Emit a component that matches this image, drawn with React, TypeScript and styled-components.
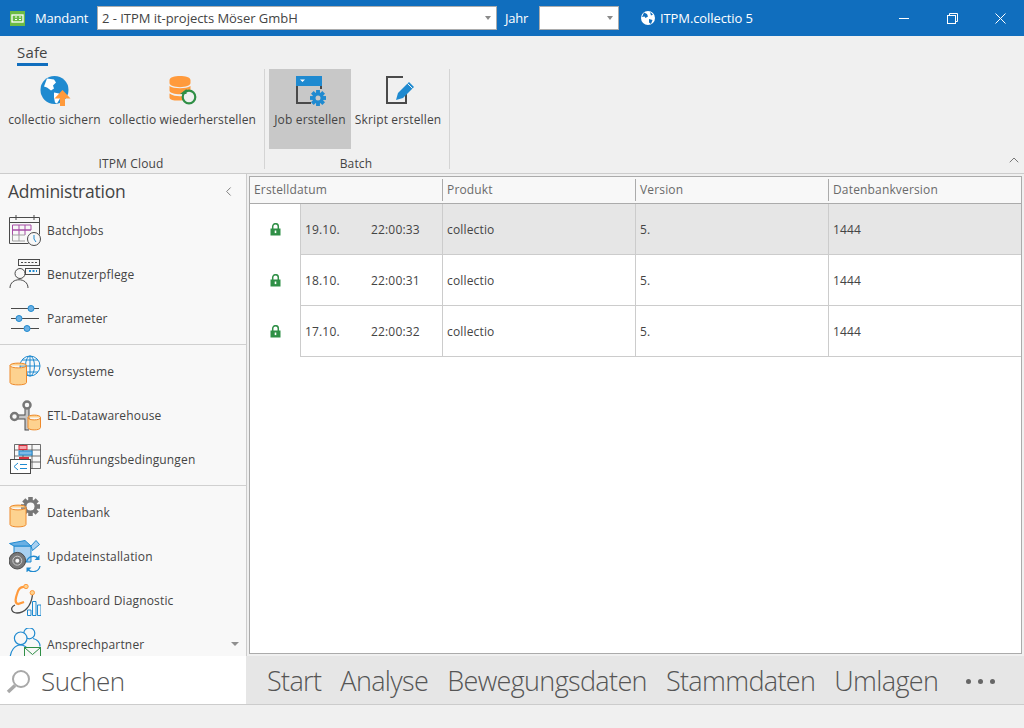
import React from "react";
import styled, { createGlobalStyle } from "styled-components";
import { ChevronLeft, ChevronUp } from "lucide-react";

const GlobalStyle = createGlobalStyle`
  html, body {
    margin: 0;
    padding: 0;
    background: #f0f0f0;
  }
  * {
    box-sizing: border-box;
  }
`;

const Window = styled.div`
  width: 1024px;
  height: 728px;
  display: flex;
  flex-direction: column;
  overflow: hidden;
  background: #f0f0f0;
  color: #444;
  font-family: "Open Sans", "Noto Sans", sans-serif;
  font-size: 12px;
  letter-spacing: 0.16px;
`;

/* title bar */
const TitleBar = styled.header`
  height: 36px;
  flex: none;
  display: flex;
  align-items: center;
  background: #106ebe;
  color: #fff;
  font-size: 13px;
  letter-spacing: -0.2px;
`;

const Logo = styled.svg`
  width: 15px;
  height: 15px;
  margin-left: 10px;
`;

const TitleLabel = styled.span<{ $w: number; $ml: number }>`
  width: ${(p) => p.$w}px;
  margin-left: ${(p) => p.$ml}px;
  white-space: nowrap;
`;

const Combo = styled.div<{ $w: number; $ml: number }>`
  width: ${(p) => p.$w}px;
  height: 24px;
  margin-left: ${(p) => p.$ml}px;
  padding: 0 4px;
  display: flex;
  align-items: center;
  justify-content: space-between;
  background: #fff;
  border: 1px solid #acacac;
  color: #444;
  letter-spacing: -0.04px;
  white-space: nowrap;
`;

const ComboArrow = styled.span`
  width: 0;
  height: 0;
  margin-right: 1px;
  border-left: 3.5px solid transparent;
  border-right: 3.5px solid transparent;
  border-top: 4px solid #8a8a8a;
`;

const AppTitle = styled.div`
  margin-left: 22px;
  display: flex;
  align-items: center;
  gap: 5px;
  letter-spacing: -0.1px;
`;

const WindowButtons = styled.div`
  margin-left: auto;
  display: flex;
`;

const WindowButton = styled.div`
  width: 48px;
  height: 36px;
  display: flex;
  align-items: center;
  justify-content: center;
`;

/* ribbon */
const Ribbon = styled.section`
  height: 138px;
  flex: none;
  border-bottom: 1px solid #ccc;
  background: #f0f0f0;
`;

const TabRow = styled.div`
  height: 33px;
  padding: 6px 0 0 17px;
`;

const Tab = styled.div`
  display: inline-block;
  height: 24px;
  font-size: 15px;
  line-height: 20px;
  color: #444;
  border-bottom: 3px solid #106ebe;
`;

const RibbonBody = styled.div`
  height: 100px;
  display: flex;
`;

const RibbonGroup = styled.div<{ $w: number }>`
  width: ${(p) => p.$w}px;
  padding-left: 4px;
  display: flex;
  flex-direction: column;
  border-right: 1px solid #d4d4d4;
`;

const GroupButtons = styled.div`
  height: 80px;
  flex: none;
  display: flex;
`;

const GroupLabel = styled.div`
  height: 15px;
  margin-top: 5px;
  padding-right: 6px;
  text-align: center;
  line-height: 20px;
`;

const RibbonButton = styled.div<{ $w: number; $active?: boolean }>`
  width: ${(p) => p.$w}px;
  padding-top: 6px;
  display: flex;
  flex-direction: column;
  align-items: center;
  white-space: nowrap;
  background: ${(p) => (p.$active ? "#c8c8c8" : "transparent")};
`;

const RibbonIcon = styled.svg`
  width: 32px;
  height: 32px;
  margin-bottom: 4px;
`;

const Collapse = styled.div`
  margin: auto 2px 1px auto;
  color: #777;
  display: flex;
`;

/* body */
const Body = styled.div`
  flex: 1;
  min-height: 0;
  display: flex;
`;

const Sidebar = styled.nav`
  width: 247px;
  flex: none;
  overflow: hidden;
  position: relative;
  background: #f8f8f8;
  border-right: 1px solid #ccc;
`;

const SidebarHeader = styled.div`
  height: 34px;
  padding: 0 10px 0 8px;
  display: flex;
  align-items: center;
  justify-content: space-between;
  font-size: 17.5px;
  color: #444;
  letter-spacing: -0.25px;
`;

const NavGroup = styled.div<{ $first?: boolean; $last?: boolean }>`
  padding: ${(p) => (p.$first ? "0 0 4px" : "4px 0")};
  border-bottom: ${(p) => (p.$last ? "none" : "1px solid #d0d0d0")};
`;

const NavItem = styled.div`
  height: 44px;
  padding-left: 9px;
  display: flex;
  align-items: center;
  gap: 6px;
  white-space: nowrap;
`;

const NavIcon = styled.svg`
  width: 32px;
  height: 32px;
  flex: none;
`;

const ScrollArrow = styled.span`
  position: absolute;
  right: 7px;
  bottom: 10px;
  width: 0;
  height: 0;
  border-left: 4px solid transparent;
  border-right: 4px solid transparent;
  border-top: 4px solid #8f8f8f;
`;

const Main = styled.main`
  flex: 1;
  min-width: 0;
  padding: 2px;
`;

const Panel = styled.div`
  height: 100%;
  background: #fff;
  border: 1px solid #ababab;
`;

const HeaderRow = styled.div`
  height: 27px;
  display: grid;
  grid-template-columns: 193px 193px 193px 1fr;
  align-items: center;
  background: #f8f8f8;
  border-bottom: 1px solid #ababab;
  color: #6a6a6a;
`;

const HeaderCell = styled.div`
  height: 22px;
  padding-left: 4px;
  line-height: 22px;
  border-right: 1px solid #ababab;
  &:last-child {
    border-right: none;
  }
`;

const DataRow = styled.div`
  height: 51px;
  display: grid;
  grid-template-columns: 50px 143px 193px 193px 1fr;
`;

const LockCell = styled.div`
  padding-left: 1px;
  display: flex;
  align-items: center;
  justify-content: center;
`;

const Cell = styled.div<{ $selected?: boolean }>`
  padding-left: 4px;
  display: flex;
  align-items: center;
  background: ${(p) => (p.$selected ? "#e6e6e6" : "#fff")};
  border-right: 1px solid #ccc;
  border-bottom: 1px solid #ccc;
  &:last-child {
    border-right: none;
  }
`;

const DateCell = styled(Cell)`
  border-left: 1px solid #ccc;
`;

const DateText = styled.span`
  width: 66px;
`;

/* bottom */
const BottomRow = styled.div`
  height: 48px;
  flex: none;
  display: flex;
`;

const SearchBox = styled.div`
  width: 246px;
  flex: none;
  padding: 2px 0 0 6px;
  display: flex;
  align-items: center;
  gap: 10px;
  background: #fff;
  font-size: 26px;
  font-weight: 300;
  color: #555;
  letter-spacing: -0.55px;
`;

const NavBar = styled.div`
  flex: 1;
  padding-left: 21px;
  display: flex;
  align-items: center;
  gap: 19px;
  background: #e6e6e6;
  font-size: 27px;
  font-weight: 300;
  color: #555;
  letter-spacing: -0.65px;
  white-space: nowrap;
`;

const NavDots = styled.div`
  margin: 2px 0 0 9px;
  display: flex;
  gap: 7px;
`;

const NavDot = styled.span`
  width: 5px;
  height: 5px;
  border-radius: 50%;
  background: #666;
`;

const StatusBar = styled.footer`
  height: 24px;
  flex: none;
  border-top: 1px solid #ccc;
  background: #f0f0f0;
`;

const BLUE = "#1f8ad0";
const ORANGE = "#ff9a3c";
const DARK = "#4a4a4a";

const Cylinder = ({ x, y, w, h }: { x: number; y: number; w: number; h: number }) => (
  <path
    d={`M${x} ${y + 2.5}c0-3.2 ${w}-3.2 ${w} 0v${h - 5}c0 3.2-${w} 3.2-${w} 0zM${x} ${y + 2.5}c0 3.2 ${w} 3.2 ${w} 0`}
    fill="#fdd28f"
    stroke="#ee8a2c"
    strokeWidth="1"
  />
);

const Gear = ({ cx, cy, r, fill }: { cx: number; cy: number; r: number; fill: string }) => (
  <g fill={fill}>
    {[0, 45, 90, 135].map((a) => (
      <rect key={a} x={cx - r * 0.24} y={cy - r} width={r * 0.48} height={r * 2} transform={`rotate(${a} ${cx} ${cy})`} />
    ))}
    <circle cx={cx} cy={cy} r={r * 0.72} />
  </g>
);

const LockIcon = () => (
  <svg width="11" height="13" viewBox="0 0 11 13">
    <path d="M2.700 6V3.500a2.800 2.800 0 0 1 5.600 0V6" fill="none" stroke="#2f8f46" strokeWidth="1.500" />
    <rect x="0.500" y="5.500" width="10" height="7" fill="#2f8f46" />
    <rect x="4.700" y="7.500" width="1.600" height="2.600" fill="#fff" />
  </svg>
);

const rows = [
  { date: "19.10.", time: "22:00:33", selected: true },
  { date: "18.10.", time: "22:00:31" },
  { date: "17.10.", time: "22:00:32" },
];

const App = () => {
  return (
    <Window>
      <GlobalStyle />
      <TitleBar>
        <Logo viewBox="0 0 15 15">
          <rect width="15" height="15" fill="#6cbb45" />
          <rect x="2" y="4" width="11" height="7" fill="none" stroke="#fff" strokeWidth="1.300" />
          <path d="M5 6h2M5 8.500h2M9 6h2M9 8.500h2" stroke="#fff" />
        </Logo>
        <TitleLabel $w={52} $ml={10}>Mandant</TitleLabel>
        <Combo $w={400} $ml={10}>
          2 - ITPM it-projects Möser GmbH
          <ComboArrow />
        </Combo>
        <TitleLabel $w={24} $ml={8}>Jahr</TitleLabel>
        <Combo $w={80} $ml={10}>
          <span />
          <ComboArrow />
        </Combo>
        <AppTitle>
          <svg width="14" height="14" viewBox="0 0 14 14">
            <circle cx="7" cy="7" r="7" fill="#fff" />
            <path d="M3 1.500l3 1.500 1 2.500-2.500 1.500-1-1.500L1 6zM8 8l3.500 1-1.500 4-2-1.500zM9 1l3 2.500-2 1z" fill="#106ebe" />
          </svg>
          ITPM.collectio 5
        </AppTitle>
        <WindowButtons>
          <WindowButton>
            <svg width="10" height="1" viewBox="0 0 10 1">
              <path d="M0 .5h10" stroke="#fff" />
            </svg>
          </WindowButton>
          <WindowButton>
            <svg width="11" height="11" viewBox="0 0 11 11" fill="none" stroke="#fff">
              <rect x="0.500" y="2.500" width="8" height="8" />
              <path d="M2.500 2.500v-2h8v8h-2" />
            </svg>
          </WindowButton>
          <WindowButton>
            <svg width="11" height="11" viewBox="0 0 11 11" fill="none" stroke="#fff">
              <path d="M.5.500l10 10M10.500.500l-10 10" />
            </svg>
          </WindowButton>
        </WindowButtons>
      </TitleBar>

      <Ribbon>
        <TabRow>
          <Tab>Safe</Tab>
        </TabRow>
        <RibbonBody>
          <RibbonGroup $w={265}>
            <GroupButtons>
              <RibbonButton $w={101}>
                <RibbonIcon viewBox="0 0 32 32">
                  <circle cx="15.500" cy="15" r="14" fill={BLUE} />
                  <path d="M8 3.500l7 1 2 3-3 3 1 3-3 2-4-3-3-1zM15 17.500l5 1 1 5-3 5-2-1-1-5z" fill="#fff" />
                  <path d="M23.500 15l8 8.500h-5.500V31h-5v-7.500h-5.500z" fill={ORANGE} />
                </RibbonIcon>
                collectio sichern
              </RibbonButton>
              <RibbonButton $w={155}>
                <RibbonIcon viewBox="0 0 32 32">
                  <path d="M2.500 5c0-5.500 21-5.500 21 0v3c0 5.500-21 5.500-21 0z" fill={ORANGE} />
                  <path d="M2.500 11c4 3 17 3 21 0v4.500c0 5-21 5-21 0zM2.500 18.500c4 3 11 3 13 2.500l1 4c-4 1-14 1-14-2.500z" fill={ORANGE} />
                  <circle cx="22" cy="22" r="6.300" fill="#f0f0f0" stroke="#2f8f46" strokeWidth="2.200" />
                  <path d="M13 19h6.500v-5z" fill="#2f8f46" />
                </RibbonIcon>
                collectio wiederherstellen
              </RibbonButton>
            </GroupButtons>
            <GroupLabel>ITPM Cloud</GroupLabel>
          </RibbonGroup>
          <RibbonGroup $w={185}>
            <GroupButtons>
              <RibbonButton $w={82} $active>
                <RibbonIcon viewBox="0 0 32 32">
                  <path d="M2 2h2v25h13v2H2zM28 2v12h-2V2z" fill={DARK} />
                  <rect x="2" y="1" width="26" height="10" fill={BLUE} />
                  <path d="M6 4.500h5l-2.500 2.500z" fill="#fff" />
                  <Gear cx={24} cy={23} r={8} fill={BLUE} />
                  <circle cx="24" cy="23" r="2.500" fill="#c8c8c8" />
                </RibbonIcon>
                Job erstellen
              </RibbonButton>
              <RibbonButton $w={94}>
                <RibbonIcon viewBox="0 0 32 32">
                  <path d="M21 2H5v26h19V17" fill="none" stroke={DARK} strokeWidth="2" />
                  <path d="M14 25l2-7L27 7l5 5L21 23z" fill={BLUE} />
                  <path d="M25.500 8.500l5 5" stroke="#f0f0f0" />
                </RibbonIcon>
                Skript erstellen
              </RibbonButton>
            </GroupButtons>
            <GroupLabel>Batch</GroupLabel>
          </RibbonGroup>
          <Collapse>
            <ChevronUp size={16} strokeWidth={1.500} />
          </Collapse>
        </RibbonBody>
      </Ribbon>

      <Body>
        <Sidebar>
          <SidebarHeader>
            Administration
            <ChevronLeft size={15} color="#777" strokeWidth={1.500} />
          </SidebarHeader>
          <NavGroup $first>
            <NavItem>
              <NavIcon viewBox="0 0 32 32">
                <path d="M.5 29.500V3.500h30v17M.5 29.500h19M.5 8.500h30M7 1v5M25 1v5" fill="none" stroke={DARK} />
                <path d="M3.500 11h18.500v5H3.500zM3.500 11v10M10 11v10M16 11v10M3.500 16h18.500" fill="none" stroke="#a64ca6" />
                <path d="M3.500 21v6H16M10 21v6M3.500 21H16" fill="none" stroke="#a0a0a0" />
                <circle cx="25" cy="25" r="6.500" fill="#f8f8f8" stroke={DARK} />
                <path d="M25 21v4l2 3" fill="none" stroke={BLUE} />
              </NavIcon>
              BatchJobs
            </NavItem>
            <NavItem>
              <NavIcon viewBox="0 0 32 32">
                <rect x="9.500" y="1.500" width="21" height="6" fill="none" stroke={DARK} />
                <path d="M12 4.500h16" stroke={DARK} strokeDasharray="2 1.500" />
                <rect x="16.500" y="10.500" width="14" height="6" fill="none" stroke={DARK} />
                <path d="M20 13h8" stroke={BLUE} strokeWidth="2" strokeDasharray="2 1.500" />
                <circle cx="11" cy="15.500" r="5" fill="#f8f8f8" stroke={DARK} />
                <path d="M1 30c0-11 18-11 18 0" fill="none" stroke={DARK} />
              </NavIcon>
              Benutzerpflege
            </NavItem>
            <NavItem>
              <NavIcon viewBox="0 0 32 32">
                <path d="M2 6.500h28M2 16.500h28M2 26.500h28" stroke={DARK} />
                <circle cx="22" cy="6.500" r="3" fill="#6ab0e4" stroke={BLUE} />
                <circle cx="10" cy="16.500" r="3" fill="#6ab0e4" stroke={BLUE} />
                <circle cx="18" cy="26.500" r="3" fill="#6ab0e4" stroke={BLUE} />
              </NavIcon>
              Parameter
            </NavItem>
          </NavGroup>
          <NavGroup>
            <NavItem>
              <NavIcon viewBox="0 0 32 32">
                <g fill="none" stroke={BLUE}>
                  <circle cx="21" cy="11" r="10" />
                  <ellipse cx="21" cy="11" rx="4.500" ry="10" />
                  <path d="M21 1v20M11 11h20M13 5h16M13 17h16" />
                </g>
                <Cylinder x={1} y={8} w={16.500} h={22} />
              </NavIcon>
              Vorsysteme
            </NavItem>
            <NavItem>
              <NavIcon viewBox="0 0 32 32">
                <path d="M18 9v20h2M16.500 18H9" fill="none" stroke={DARK} strokeWidth="5" />
                <path d="M18 9v20h2M16.500 18H9" fill="none" stroke="#c4c4c4" strokeWidth="3" />
                <circle cx="18" cy="6" r="3.500" fill="#f8f8f8" stroke="#777" strokeWidth="2.500" />
                <circle cx="5.500" cy="17.500" r="3.500" fill="#f8f8f8" stroke="#777" strokeWidth="2.500" />
                <Cylinder x={19} y={16} w={12.500} h={15} />
              </NavIcon>
              ETL-Datawarehouse
            </NavItem>
            <NavItem>
              <NavIcon viewBox="0 0 32 32">
                <path d="M5.500 1.500h26v24h-10M5.500 1.500V16M5.500 7h26M5.500 13h26M5.500 19h26M14 1.500V16M23 1.500v24" fill="none" stroke={DARK} strokeWidth="0.800" />
                <rect x="10" y="2.500" width="8" height="4" fill="#f4a6ad" stroke="#d9303e" />
                <rect x="10" y="8" width="13" height="4" fill="#7fb9e6" stroke={BLUE} />
                <rect x="10" y="14" width="10" height="2" fill="#d9303e" />
                <rect x="1.500" y="16.500" width="20" height="14" fill="#fff" stroke={DARK} />
                <path d="M9 20l-4 3.500 4 3.500M11 21.500h7M11 25.500h7" fill="none" stroke={BLUE} />
              </NavIcon>
              Ausführungsbedingungen
            </NavItem>
          </NavGroup>
          <NavGroup $last>
            <NavItem>
              <NavIcon viewBox="0 0 32 32">
                <Gear cx={21.500} cy={10.500} r={9.500} fill="#777" />
                <circle cx="21.500" cy="10.500" r="4" fill="#f8f8f8" />
                <Cylinder x={1} y={9} w={16} h={22} />
              </NavIcon>
              Datenbank
            </NavItem>
            <NavItem>
              <NavIcon viewBox="0 0 32 32">
                <path d="M5 6h17v16H5z" fill="#a8d0f0" stroke={BLUE} />
                <path d="M.5 3.500L16 .5l6 5.500H5z" fill="#6ab0e4" stroke={BLUE} />
                <path d="M22 6l5-5.500 3.500 4-7 6z" fill="#a8d0f0" stroke={BLUE} />
                <circle cx="8.300" cy="20.700" r="8.300" fill="#777" stroke={DARK} />
                <circle cx="8.300" cy="20.700" r="4.500" fill="none" stroke="#ccc" />
                <circle cx="8.300" cy="20.700" r="2" fill="#f8f8f8" />
                <path d="M17.500 22a7 7 0 0 1 12-3.500M31 26a7 7 0 0 1-12 3.500" fill="none" stroke={BLUE} strokeWidth="1.300" />
                <path d="M30.500 15v5h-5zM17.500 32.500v-5h5z" fill={BLUE} />
              </NavIcon>
              Updateinstallation
            </NavItem>
            <NavItem>
              <NavIcon viewBox="0 0 32 32">
                <path d="M16 3c-5-1-7 3-8 7-1 3-3 9 1 10l6-2" fill="none" stroke={ORANGE} strokeWidth="2.200" />
                <path d="M6 21c-6 3-3 8 2 8 7 0 14-6 15.500-18" fill="none" stroke={DARK} strokeWidth="1.300" />
                <circle cx="17" cy="2.500" r="2.200" fill="#fdd28f" stroke={ORANGE} />
                <circle cx="23.300" cy="8.700" r="2.200" fill="#fdd28f" stroke={ORANGE} />
                <path d="M18.500 26h3.500v5.500h-3.500zM23.500 17.500H27v14h-3.500zM28.500 21H32v10.500h-3.500z" fill="#f8f8f8" stroke={BLUE} />
              </NavIcon>
              Dashboard Diagnostic
            </NavItem>
            <NavItem>
              <NavIcon viewBox="0 0 32 32">
                <g fill="none" stroke={BLUE} strokeWidth="1.200">
                  <circle cx="20.300" cy="5.300" r="5.500" />
                  <path d="M24 10.500c4 1 7 4 7 8" />
                  <circle cx="11.700" cy="10.300" r="6.300" fill="#f8f8f8" />
                  <path d="M1 32c0-20 21-20 21 0" />
                </g>
                <rect x="15.500" y="19.500" width="16" height="13" fill="#f8f8f8" stroke="#2f8f46" />
                <path d="M16 20l7.500 6.500L31 20" fill="none" stroke="#2f8f46" />
              </NavIcon>
              Ansprechpartner
            </NavItem>
          </NavGroup>
          <ScrollArrow />
        </Sidebar>
        <Main>
          <Panel>
            <HeaderRow>
              <HeaderCell>Erstelldatum</HeaderCell>
              <HeaderCell>Produkt</HeaderCell>
              <HeaderCell>Version</HeaderCell>
              <HeaderCell>Datenbankversion</HeaderCell>
            </HeaderRow>
            {rows.map((row) => (
              <DataRow key={row.date}>
                <LockCell>
                  <LockIcon />
                </LockCell>
                <DateCell $selected={row.selected}>
                  <DateText>{row.date}</DateText>
                  {row.time}
                </DateCell>
                <Cell $selected={row.selected}>collectio</Cell>
                <Cell $selected={row.selected}>5.</Cell>
                <Cell $selected={row.selected}>1444</Cell>
              </DataRow>
            ))}
          </Panel>
        </Main>
      </Body>

      <BottomRow>
        <SearchBox>
          <svg width="25" height="25" viewBox="0 0 25 25" fill="none" stroke="#a8a8a8">
            <circle cx="15" cy="10" r="8" strokeWidth="2" />
            <path d="M9 16.500L2 23" strokeWidth="3.500" />
          </svg>
          Suchen
        </SearchBox>
        <NavBar>
          <span>Start</span>
          <span>Analyse</span>
          <span>Bewegungsdaten</span>
          <span>Stammdaten</span>
          <span>Umlagen</span>
          <NavDots>
            <NavDot />
            <NavDot />
            <NavDot />
          </NavDots>
        </NavBar>
      </BottomRow>
      <StatusBar />
    </Window>
  );
};

export default App;
